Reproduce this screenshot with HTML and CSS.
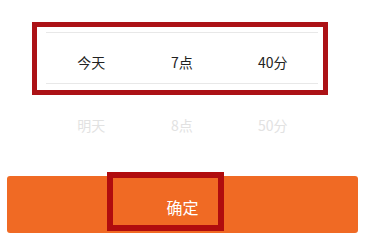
FILE: index.html
```html
<!DOCTYPE html>
<html lang="zh">
<head>
<meta charset="utf-8">
<link rel="stylesheet" href="styles.css">
</head>
<body>
<div class="screen">
  <div class="highlight">
    <div class="row selected">
      <span>今天</span><span>7点</span><span>40分</span>
    </div>
  </div>
  <div class="row next">
    <span>明天</span><span>8点</span><span>50分</span>
  </div>
  <div class="button">
    <span class="label">确定</span>
    <div class="mark"></div>
  </div>
</div>
</body>
</html>
```
FILE: styles.css
```css
html, body {
  margin: 0;
  padding: 0;
  background: #ffffff;
  font-family: "Noto Sans CJK SC", "Noto Sans", sans-serif;
}
.screen {
  width: 367px;
  height: 241px;
  padding-top: 22px;
  box-sizing: border-box;
  overflow: hidden;
}
.highlight {
  margin-left: 32px;
  width: 296px;
  height: 73px;
  box-sizing: border-box;
  border: 5px solid #ac1216;
  padding: 5px 5px 0 9px;
}
.row {
  display: grid;
  grid-template-columns: repeat(3, 1fr);
  font-size: 14px;
  line-height: 20px;
  text-align: center;
}
.selected {
  height: 50px;
  border-top: 1px solid #e8e8e8;
  border-bottom: 1px solid #e8e8e8;
  align-items: center;
  padding-top: 8px;
  box-sizing: content-box;
  height: 42px;
  color: #222222;
}
.next {
  width: 272px;
  margin: 20px 0 0 46px;
  color: #e2e2e2;
}
.button {
  position: relative;
  margin: 41px 0 0 7px;
  width: 351px;
  height: 57px;
  background: #f06a24;
  border-radius: 3px;
  display: flex;
  align-items: center;
  justify-content: center;
  padding-top: 4px;
  box-sizing: border-box;
}
.label {
  color: #ffffff;
  font-size: 16px;
  line-height: 20px;
}
.mark {
  position: absolute;
  left: 100px;
  top: -4px;
  width: 117px;
  height: 59px;
  box-sizing: border-box;
  border: 6px solid #b00c0e;
}
```
